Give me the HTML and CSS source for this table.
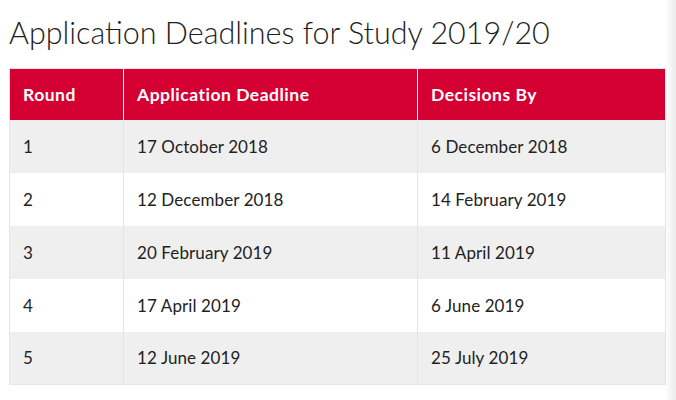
FILE: index.html
```html
<!DOCTYPE html>
<html lang="en">
<head>
<meta charset="utf-8">
<title>Application Deadlines</title>
<link rel="stylesheet" href="styles.css">
</head>
<body>
<main class="page">
  <h2 class="title">Application Deadlines for Study 2019/20</h2>
  <table class="deadlines">
    <thead>
      <tr><th class="c1">Round</th><th class="c2">Application Deadline</th><th class="c3">Decisions By</th></tr>
    </thead>
    <tbody>
      <tr><td>1</td><td>17 October 2018</td><td>6 December 2018</td></tr>
      <tr><td>2</td><td>12 December 2018</td><td>14 February 2019</td></tr>
      <tr><td>3</td><td>20 February 2019</td><td>11 April 2019</td></tr>
      <tr><td>4</td><td>17 April 2019</td><td>6 June 2019</td></tr>
      <tr><td>5</td><td>12 June 2019</td><td>25 July 2019</td></tr>
    </tbody>
  </table>
</main>
<div class="edge-shade"></div>
</body>
</html>
```
FILE: styles.css
```css
html, body {
  margin: 0;
  padding: 0;
  background: #ffffff;
}
body {
  font-family: "Lato", "Open Sans", sans-serif;
  color: #222222;
}
.page {
  padding: 14px 11px 0 9px;
}
.title {
  margin: 0 0 18px 0;
  font-family: "Lato", sans-serif;
  font-weight: 300;
  font-size: 30.5px;
  line-height: 36px;
  color: #1d1d1d;
  letter-spacing: 0;
}
.deadlines {
  width: 657px;
  border-collapse: collapse;
  border: 1px solid #e6e6e6;
  font-size: 17px;
}
.deadlines th {
  background: #d50032;
  color: #ffffff;
  font-weight: 700;
  font-size: 17.5px;
  letter-spacing: 0.5px;
  text-align: left;
  height: 51px;
  padding: 0 13px;
  border-left: 1px solid #ffffff;
  box-sizing: border-box;
}
.deadlines th:first-child {
  border-left: none;
}
.deadlines .c1 { width: 114px; }
.deadlines .c2 { width: 294px; }
.deadlines td {
  height: 53px;
  padding: 0 13px;
  border-left: 1px solid #e4e4e4;
  box-sizing: border-box;
  font-weight: 400;
  letter-spacing: 0.1px;
}
.deadlines td:first-child {
  border-left: none;
}
.deadlines tbody tr:nth-child(odd) {
  background: #efefef;
}
.deadlines tbody tr:nth-child(even) {
  background: #ffffff;
}
.edge-shade {
  position: fixed;
  top: 0;
  right: 0;
  width: 11px;
  height: 100%;
  background: linear-gradient(to right, rgba(235,235,235,0), #ececec);
  pointer-events: none;
}
```
